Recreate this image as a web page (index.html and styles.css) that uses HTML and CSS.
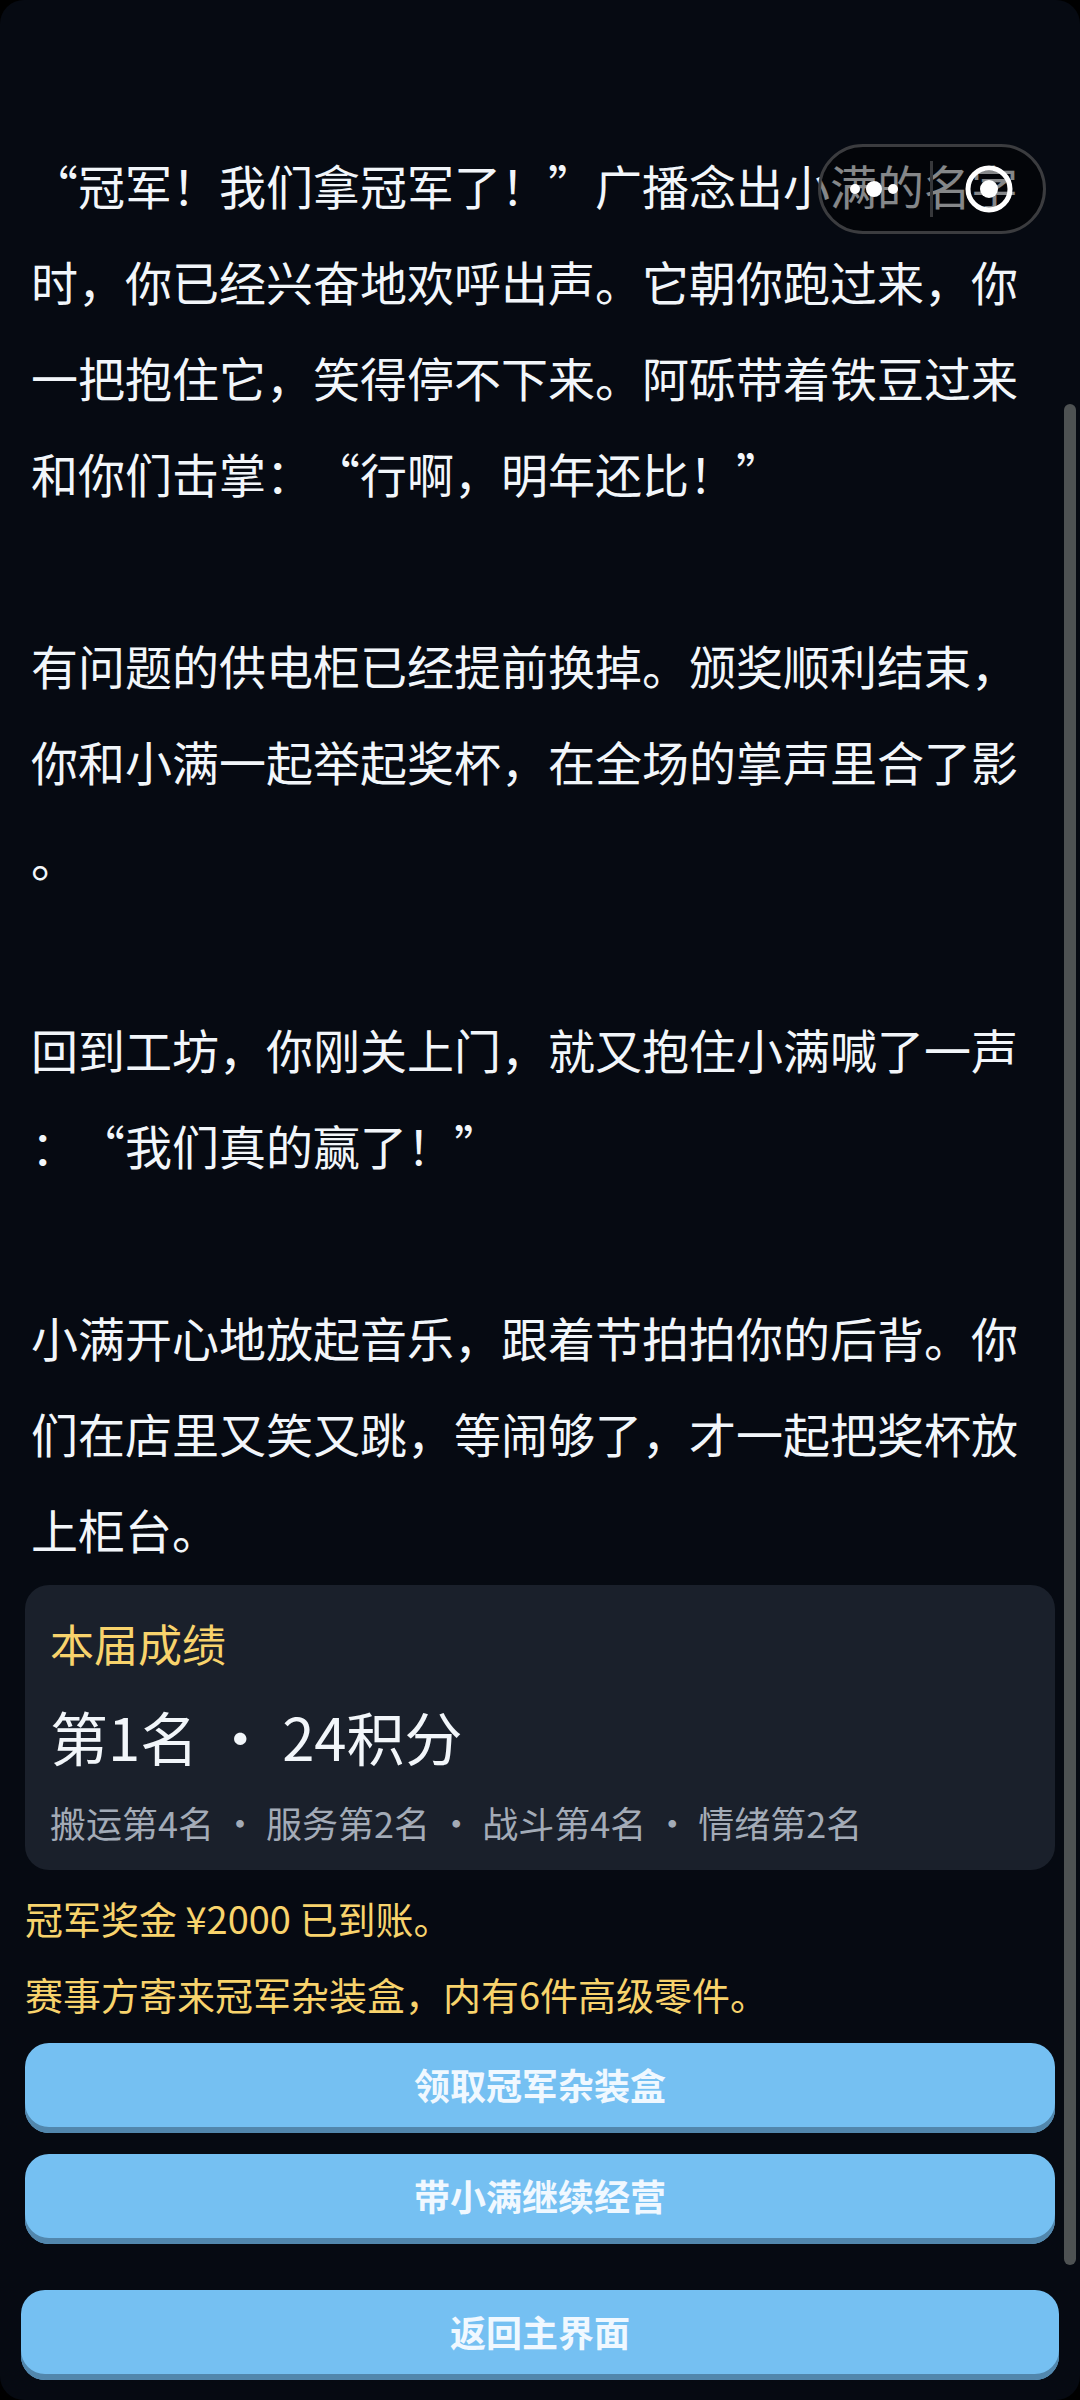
FILE: index.html
```html
<!DOCTYPE html>
<html lang="zh-CN">
<head>
<meta charset="utf-8">
<meta name="viewport" content="width=device-width, initial-scale=1">
<title>本届成绩</title>
<link rel="stylesheet" href="styles.css">
</head>
<body>
<div class="screen">
  <div class="capsule">
    <button class="capsule-btn" type="button" aria-label="更多">
      <svg width="50" height="50" viewBox="0 0 50 50" fill="#fff"><circle cx="6" cy="25" r="5"/><circle cx="25" cy="25" r="8"/><circle cx="44" cy="25" r="5"/></svg>
    </button>
    <span class="capsule-line"></span>
    <button class="capsule-btn" type="button" aria-label="关闭">
      <svg width="50" height="50" viewBox="0 0 50 50"><circle cx="25" cy="25" r="21" fill="none" stroke="#fff" stroke-width="5"/><circle cx="25" cy="25" r="9" fill="#fff"/></svg>
    </button>
  </div>

  <main class="content">
    <article class="story">
      <p>“冠军！我们拿冠军了！”广播念出小满的名字时，你已经兴奋地欢呼出声。它朝你跑过来，你一把抱住它，笑得停不下来。阿砾带着铁豆过来和你们击掌：“行啊，明年还比！”</p>
      <p>有问题的供电柜已经提前换掉。颁奖顺利结束，你和小满一起举起奖杯，在全场的掌声里合了影。</p>
      <p>回到工坊，你刚关上门，就又抱住小满喊了一声：“我们真的赢了！”</p>
      <p>小满开心地放起音乐，跟着节拍拍你的后背。你们在店里又笑又跳，等闹够了，才一起把奖杯放上柜台。</p>
    </article>

    <section class="card">
      <h2 class="card-title">本届成绩</h2>
      <p class="card-score">第1名 · 24积分</p>
      <p class="card-detail">搬运第4名 · 服务第2名 · 战斗第4名 · 情绪第2名</p>
    </section>

    <div class="rewards">
      <p>冠军奖金 ¥2000 已到账。</p>
      <p>赛事方寄来冠军杂装盒，内有6件高级零件。</p>
    </div>

    <div class="actions">
      <button class="btn" type="button">领取冠军杂装盒</button>
      <button class="btn" type="button">带小满继续经营</button>
    </div>
    <div class="scroll-thumb"></div>
  </main>

  <footer class="footer">
    <button class="btn" type="button">返回主界面</button>
  </footer>
</div>
</body>
</html>
```
FILE: styles.css
```css
* {
  box-sizing: border-box;
  margin: 0;
  padding: 0;
}

body {
  background: #000;
  color: #f2f6fa;
  font-family: "Noto Sans CJK SC", sans-serif;
  text-spacing-trim: space-all;
}

.screen {
  position: relative;
  min-height: 100vh;
  display: flex;
  flex-direction: column;
  background: #060a12;
  border-radius: 24px;
}

.content {
  position: relative;
  flex: 1;
  padding: 137px 25px 0;
}

.story {
  display: flex;
  flex-direction: column;
  gap: 96px;
  padding: 0 6px;
  font-size: 47px;
  line-height: 96px;
  line-break: anywhere;
}

.card {
  margin-top: 8px;
  padding: 20px 25px 17px;
  background: #1a202b;
  border-radius: 24px;
}

.card-title {
  color: #f8d36c;
  font-size: 44px;
  font-weight: 400;
  line-height: 76px;
}

.card-score {
  font-size: 58px;
  line-height: 110px;
}

.card-detail {
  color: #a3abb7;
  font-size: 36px;
  line-height: 62px;
}

.rewards {
  padding-top: 10px;
  color: #f8d36c;
  font-size: 38px;
  line-height: 76px;
}

.actions {
  display: flex;
  flex-direction: column;
  gap: 21px;
  padding-top: 11px;
}

.btn {
  display: block;
  width: 100%;
  height: 90px;
  padding-bottom: 9px;
  border: 0;
  border-radius: 24px;
  background: #75c0f2;
  box-shadow: inset 0 -6px 0 #5287ad;
  color: #f0f8ff;
  font: inherit;
  font-size: 36px;
  font-weight: 700;
  cursor: pointer;
}

.footer {
  padding: 46px 21px 20px;
}

.scroll-thumb {
  position: absolute;
  top: 404px;
  right: 4px;
  bottom: -21px;
  width: 12px;
  border-radius: 6px;
  background: #4e5253;
}

.capsule {
  position: absolute;
  top: 144px;
  right: 34px;
  z-index: 1;
  display: flex;
  align-items: center;
  gap: 3px;
  width: 228px;
  height: 90px;
  border: 3px solid #3b3c3f;
  border-radius: 45px;
  background: rgba(0, 0, 0, 0.45);
}

.capsule-btn {
  display: flex;
  align-items: center;
  justify-content: center;
  width: 106px;
  height: 100%;
  border: 0;
  background: none;
  cursor: pointer;
}

.capsule-line {
  width: 3px;
  height: 56px;
  background: #37383b;
}
```
